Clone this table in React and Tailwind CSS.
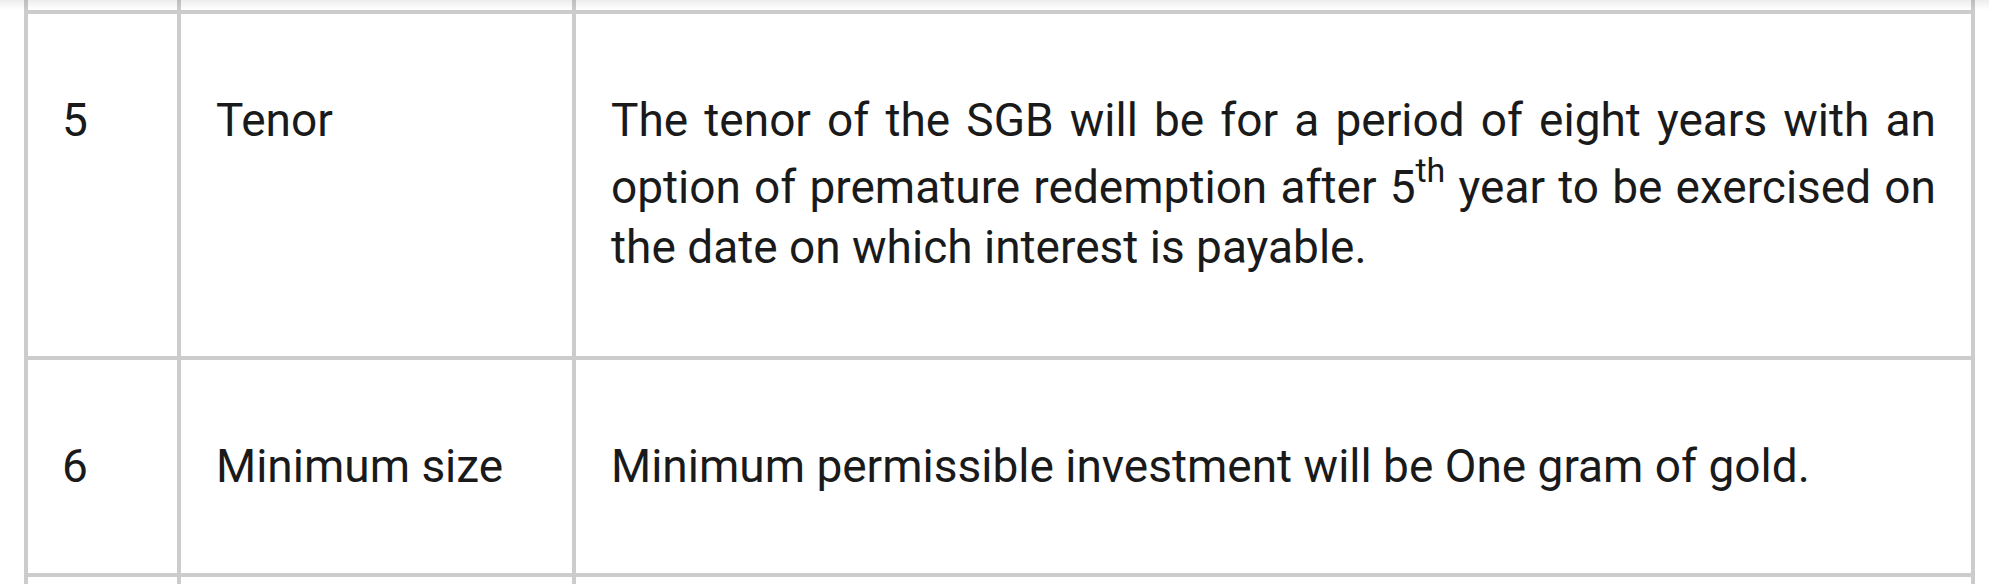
export default function App() {
  const line = "border-[#cccccc]";
  return (
    <div className="relative h-[584px] w-full overflow-hidden bg-white pl-[24px] text-[46px] leading-[60px] text-[#1a1a1a] [font-family:Roboto,'Liberation_Sans',sans-serif]">
      {/* previous row end */}
      <div className={`grid h-[14px] w-[1951px] grid-cols-[153px_395px_1403px] border-b-4 ${line}`}>
        <div className={`border-l-4 ${line}`} />
        <div className={`border-l-4 ${line}`} />
        <div className={`border-x-4 ${line}`} />
      </div>

      {/* row 5 */}
      <div className={`grid h-[346px] w-[1951px] grid-cols-[153px_395px_1403px] border-b-4 ${line}`}>
        <div className={`border-l-4 ${line} pl-[34px] pt-[76px]`}>5</div>
        <div className={`border-l-4 ${line} pl-[35px] pt-[76px]`}>Tenor</div>
        <div className={`border-x-4 ${line} px-[35px] pt-[76px]`}>
          <div className="text-justify [text-align-last:justify]">
            The tenor of the SGB will be for a period of eight years with an
          </div>
          <div className="mt-[7px] text-justify [text-align-last:justify]">
            option of premature redemption after 5<sup className="top-[-0.62em] text-[0.74em]">th</sup> year to be exercised on
          </div>
          <div>the date on which interest is payable.</div>
        </div>
      </div>

      {/* row 6 */}
      <div className={`grid h-[217px] w-[1951px] grid-cols-[153px_395px_1403px] border-b-4 ${line}`}>
        <div className={`border-l-4 ${line} pl-[34px] pt-[76px]`}>6</div>
        <div className={`border-l-4 ${line} pl-[35px] pt-[76px]`}>Minimum size</div>
        <div className={`border-x-4 ${line} px-[35px] pt-[76px]`}>
          Minimum permissible investment will be One gram of gold.
        </div>
      </div>

      {/* next row start */}
      <div className="grid h-[10px] w-[1951px] grid-cols-[153px_395px_1403px]">
        <div className={`border-l-4 ${line}`} />
        <div className={`border-l-4 ${line}`} />
        <div className={`border-x-4 ${line}`} />
      </div>

      {/* toolbar shadow */}
      <div className="pointer-events-none absolute inset-x-0 top-0 h-[10px] bg-gradient-to-b from-black/[0.07] to-transparent" />
    </div>
  );
}
